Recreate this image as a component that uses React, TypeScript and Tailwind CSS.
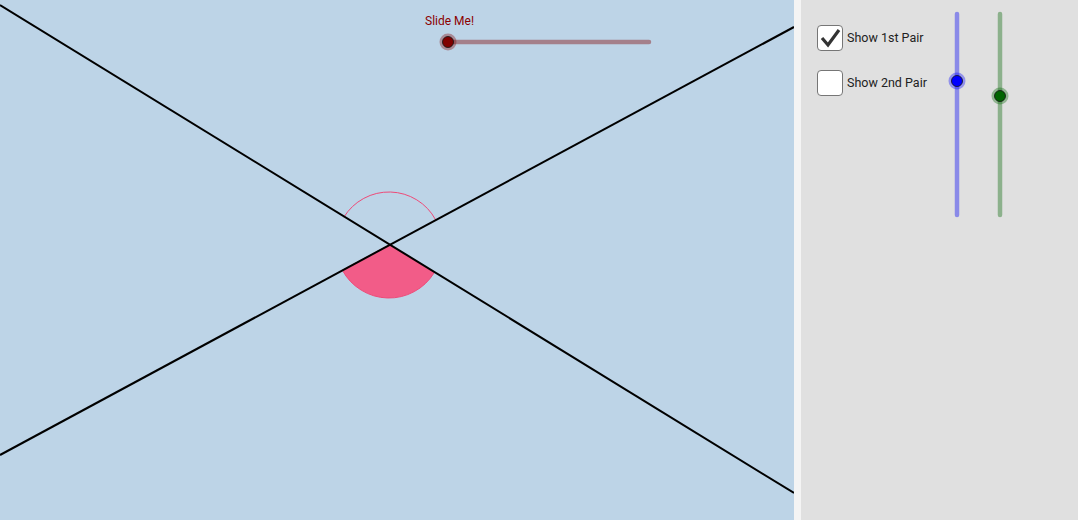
import React from "react";

const font = { fontFamily: "Roboto, 'Liberation Sans', sans-serif" };

function Check({ checked, label }: { checked: boolean; label: string }) {
  return (
    <div className="flex items-center gap-[4px] h-[26px]">
      <div className="w-[26px] h-[26px] rounded-[4px] border-[1.5px] border-[#767676] bg-white flex items-center justify-center">
        {checked && (
          <svg width="22" height="22" viewBox="0 0 22 22">
            <path d="M3 11 L9 18 L20 3" fill="none" stroke="#333" strokeWidth="3.2" strokeLinejoin="miter" />
          </svg>
        )}
      </div>
      <span className="text-[12.5px] text-[#222] leading-none">{label}</span>
    </div>
  );
}

function VSlider({ x, knob, track, fill }: { x: number; knob: number; track: string; fill: string }) {
  return (
    <g>
      <line x1={x} y1={14} x2={x} y2={215} stroke={track} strokeWidth="4.5" strokeLinecap="round" />
      <circle cx={x} cy={knob} r="8.5" fill={fill} opacity="0.35" />
      <circle cx={x} cy={knob} r="5.5" fill={fill} stroke="#111" strokeWidth="0.8" />
    </g>
  );
}

export default function App() {
  const cx = 389;
  const cy = 245;
  const r = 53;
  const a1 = Math.atan(488 / 794);
  const a2 = Math.atan(428 / 794);
  // upper arc: from up-right (line 2) to up-left (line 1)
  const ur = [cx + r * Math.cos(a2), cy - r * Math.sin(a2)];
  const ul = [cx - r * Math.cos(a1), cy - r * Math.sin(a1)];
  // lower sector: from down-left (line 2) to down-right (line 1)
  const dl = [cx - r * Math.cos(a2), cy + r * Math.sin(a2)];
  const dr = [cx + r * Math.cos(a1), cy + r * Math.sin(a1)];

  return (
    <div className="flex w-[1078px] h-[520px] bg-[#e0e0e0]" style={font}>
      <div className="relative w-[794px] h-full bg-[#bdd4e7] overflow-hidden">
        <svg className="absolute inset-0" width="794" height="520">
          <path
            d={`M ${cx} ${cy} L ${dl[0]} ${dl[1]} A ${r} ${r} 0 0 0 ${dr[0]} ${dr[1]} Z`}
            fill="#f25c88"
            stroke="#ee4a78"
            strokeWidth="1"
          />
          <path
            d={`M ${ur[0]} ${ur[1]} A ${r} ${r} 0 0 0 ${ul[0]} ${ul[1]}`}
            fill="none"
            stroke="#ee4a78"
            strokeWidth="1"
          />
          <line x1="0" y1="5" x2="794" y2="493" stroke="#000" strokeWidth="2" />
          <line x1="0" y1="455" x2="794" y2="27" stroke="#000" strokeWidth="2" />
          <text x="425" y="25" fontSize="12" fill="#8b0000" style={font}>
            Slide Me!
          </text>
          <line x1="448" y1="42" x2="649" y2="42" stroke="#a4808b" strokeWidth="4.5" strokeLinecap="round" />
          <circle cx="448" cy="42" r="8.5" fill="#800000" opacity="0.35" />
          <circle cx="448" cy="42" r="5.5" fill="#800000" stroke="#111" strokeWidth="0.8" />
        </svg>
      </div>
      <div className="w-[7px] h-full bg-[#f4f4f4]" />
      <div className="flex flex-1 h-full">
        <div className="w-[139px] pl-[16px] pt-[25px] flex flex-col gap-[19px]">
          <Check checked label="Show 1st Pair" />
          <Check checked={false} label="Show 2nd Pair" />
        </div>
        <svg width="100" height="230">
          <VSlider x={17} knob={81} track="#8a8ae8" fill="#0000ff" />
          <VSlider x={60} knob={96} track="#8cb18c" fill="#006400" />
        </svg>
      </div>
    </div>
  );
}
